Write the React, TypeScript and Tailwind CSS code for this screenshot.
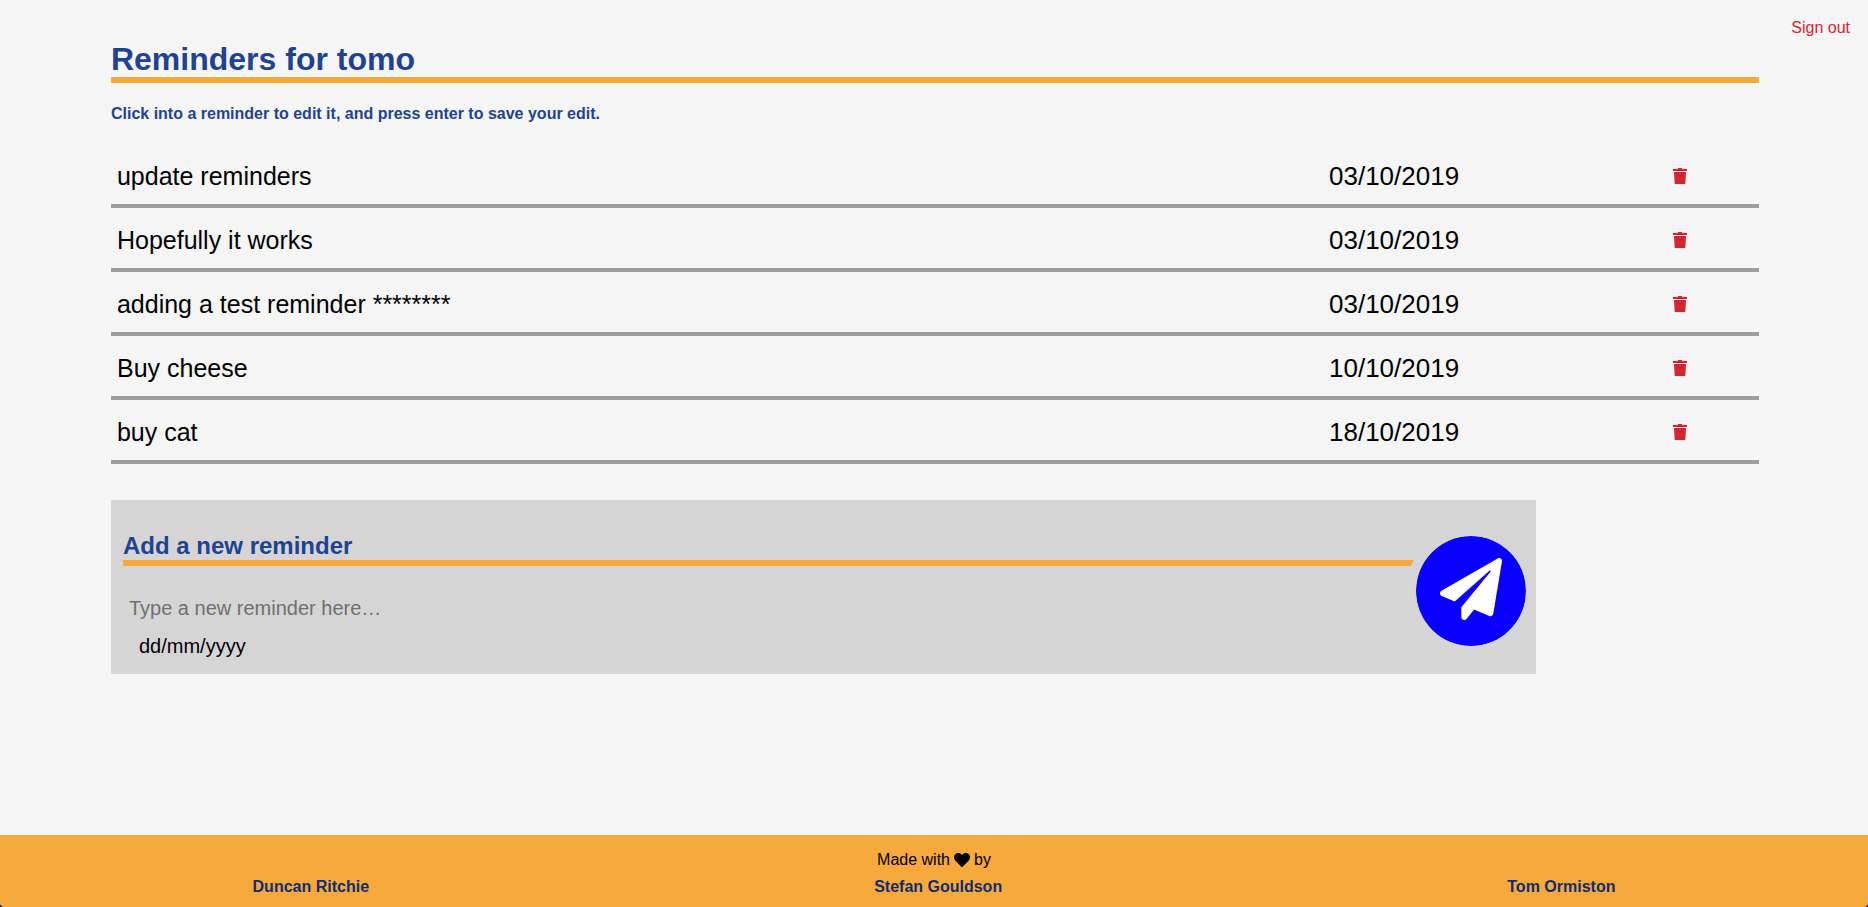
import { FaHeart, FaPaperPlane } from "react-icons/fa";

interface Reminder {
  id: number;
  text: string;
  date: string;
}

const reminders: Reminder[] = [
  { id: 1, text: "update reminders", date: "03/10/2019" },
  { id: 2, text: "Hopefully it works", date: "03/10/2019" },
  { id: 3, text: "adding a test reminder ********", date: "03/10/2019" },
  { id: 4, text: "Buy cheese", date: "10/10/2019" },
  { id: 5, text: "buy cat", date: "18/10/2019" },
];

const authors = ["Duncan Ritchie", "Stefan Gouldson", "Tom Ormiston"];

function TrashIcon() {
  return (
    <svg viewBox="0 0 14 16" className="h-4 w-3.5" fill="currentColor" aria-hidden="true">
      <path d="M4.6 1 5.2.2 5.6 0h2.8l.4.2.6.8H14v2H0V1z" />
      <path d="M1 4h12l-.6 11.2a.85.85 0 0 1-.85.8H2.45a.85.85 0 0 1-.85-.8z" />
    </svg>
  );
}

function ReminderRow({ reminder }: { reminder: Reminder }) {
  return (
    <li className="grid h-16 grid-cols-[650fr_251fr_95fr] items-center border-b-4 border-[#9e9e9e] pt-1 text-black">
      <input
        type="text"
        aria-label="Reminder"
        defaultValue={reminder.text}
        className="min-w-0 bg-transparent px-1.5 text-[25px] leading-8 outline-none"
      />
      <input
        type="text"
        aria-label={`Date for ${reminder.text}`}
        defaultValue={reminder.date}
        className="min-w-0 bg-transparent text-center text-[26px] leading-8 outline-none"
      />
      <button
        type="button"
        aria-label={`Delete ${reminder.text}`}
        className="justify-self-center text-[#d4252f]"
      >
        <TrashIcon />
      </button>
    </li>
  );
}

function NewReminderForm() {
  return (
    <form
      className="mt-9 flex w-[86.5%] items-center bg-[#d5d5d5]"
      onSubmit={(event) => event.preventDefault()}
    >
      <div className="flex min-w-0 flex-1 flex-col pt-8 pb-3.5 pl-3">
        <h2 className="border-b-6 border-[#f8a93b] text-2xl leading-7 font-bold text-[#1f4390]">
          Add a new reminder
        </h2>
        <input
          type="text"
          aria-label="New reminder"
          placeholder="Type a new reminder here…"
          className="mt-7 h-7 bg-transparent px-1.5 text-xl outline-none placeholder:text-[#707070]"
        />
        <input
          type="text"
          aria-label="Due date"
          placeholder="dd/mm/yyyy"
          className="mt-2.5 h-7 bg-transparent px-4 text-xl outline-none placeholder:text-black"
        />
      </div>
      <button
        type="submit"
        aria-label="Add reminder"
        className="relative mt-2 -ml-4 flex size-[130px] shrink-0 items-center justify-center rounded-full border-10 border-[#d5d5d5] bg-[#0a00ff] bg-clip-padding pb-1 text-white"
      >
        <FaPaperPlane className="size-[62px]" />
      </button>
    </form>
  );
}

export default function App() {
  return (
    <div className="flex min-h-screen flex-col bg-[#f5f5f5] font-['Liberation_Sans',Arial,sans-serif]">
      <a href="#sign-out" className="absolute top-4 right-[18px] text-base text-[#d4252f]">
        Sign out
      </a>
      <main className="mr-[5.84%] ml-[5.94%] flex-1 pt-9">
        <h1 className="border-b-6 border-[#f8a93b] pt-[5px] text-[32px] leading-9 font-bold text-[#1f4390]">
          Reminders for tomo
        </h1>
        <p className="mt-[19px] text-base font-bold text-[#1f4390]">
          Click into a reminder to edit it, and press enter to save your edit.
        </p>
        <ul className="mt-[18px]">
          {reminders.map((reminder) => (
            <ReminderRow key={reminder.id} reminder={reminder} />
          ))}
        </ul>
        <NewReminderForm />
      </main>
      <div className="bg-black">
        <footer className="rounded-b-[4px] bg-[#f8a93b] pt-[13px] pb-2 text-base">
          <p className="flex items-center justify-center gap-1 text-black">
            Made with <FaHeart className="size-4" /> by
          </p>
          <ul className="mt-[3px] flex justify-around font-bold text-[#0f2b74]">
            {authors.map((author) => (
              <li key={author}>
                <a href="#authors">{author}</a>
              </li>
            ))}
          </ul>
        </footer>
      </div>
    </div>
  );
}
